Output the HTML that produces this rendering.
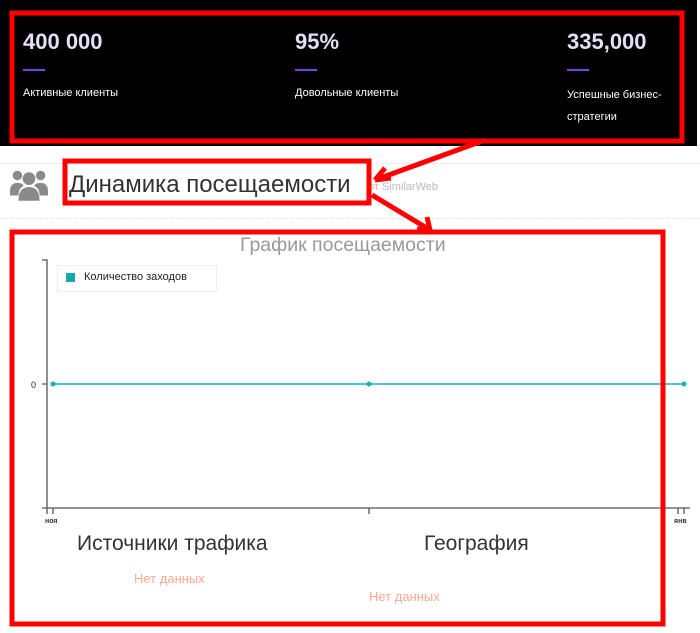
<!DOCTYPE html>
<html><head><meta charset="utf-8"><style>
body{margin:0;width:700px;height:633px;background:#fff;position:relative;overflow:hidden;font-family:"Liberation Sans",sans-serif}
.a{position:absolute;white-space:nowrap}
</style></head><body>
<div class="a" style="left:0;top:0;width:697px;height:146px;background:#000"></div>
<div class="a" style="left:23px;top:29px;color:#e6ddf7;font-size:22px;font-weight:bold">400 000</div>
<div class="a" style="left:295px;top:29px;color:#e6ddf7;font-size:22px;font-weight:bold">95%</div>
<div class="a" style="left:567px;top:29px;color:#e6ddf7;font-size:22px;font-weight:bold">335,000</div>
<div class="a" style="left:23px;top:69px;width:22px;height:2px;background:#7b3fe4"></div>
<div class="a" style="left:295px;top:69px;width:22px;height:2px;background:#7b3fe4"></div>
<div class="a" style="left:567px;top:69px;width:22px;height:2px;background:#7b3fe4"></div>
<div class="a" style="left:23px;top:87px;color:#fff;font-size:11px">Активные клиенты</div>
<div class="a" style="left:295px;top:87px;color:#fff;font-size:11px">Довольные клиенты</div>
<div class="a" style="left:567px;top:84px;color:#fff;font-size:11px;line-height:22px;white-space:normal;width:110px">Успешные бизнес-стратегии</div>
<div class="a" style="left:0;top:163px;width:700px;height:1px;background:#eee"></div>
<div class="a" style="left:0;top:218px;width:700px;border-top:1px dashed #e6e6e6"></div>
<svg class="a" style="left:10px;top:170px" width="38" height="32" viewBox="0 0 36 30"><g fill="#8a8a8a"><circle cx="7" cy="5" r="4.5"/><circle cx="29" cy="5" r="4.5"/><circle cx="18" cy="8" r="6"/><path d="M0 20q0-8 7-8q5 0 6 3q-5 2-5 9H0z"/><path d="M36 20q0-8-7-8q-5 0-6 3q5 2 5 9h8z"/><path d="M8 29q0-13 10-13t10 13z"/></g></svg>
<div class="a" style="left:69px;top:171px;color:#333;font-size:24px">Динамика посещаемости</div>
<div class="a" style="left:368px;top:181px;color:#bbb;font-size:11px">от SimilarWeb</div>
<div class="a" style="left:240px;top:234px;color:#999;font-size:19.5px">График посещаемости</div>
<div class="a" style="left:57px;top:265px;width:158px;height:25px;border:1px solid #eee;background:#fff"></div>
<div class="a" style="left:66px;top:273px;width:9px;height:9px;background:#17a7b0"></div>
<div class="a" style="left:84px;top:271px;color:#222;font-size:11px">Количество заходов</div>
<svg class="a" style="left:0;top:0" width="700" height="633">
<path d="M42 260H47V508M42 508H690M47 508v6M53 508v6M369 508v6M684 508v6M678 508v6M42 384h5" stroke="#555" stroke-width="1.3" fill="none"/>
<line x1="53" y1="384" x2="684" y2="384" stroke="#17b0b9" stroke-width="1.5"/>
<circle cx="53" cy="384" r="2.5" fill="#17b0b9"/><circle cx="369" cy="384" r="2.5" fill="#17b0b9"/><circle cx="684" cy="384" r="2.5" fill="#17b0b9"/>
<text x="31" y="388" font-size="9" fill="#222" font-family="Liberation Sans">0</text>
<text x="45" y="523" font-size="7" font-weight="bold" fill="#333" font-family="Liberation Sans">ноя</text>
<text x="674" y="523" font-size="7" font-weight="bold" fill="#333" font-family="Liberation Sans">янв</text>
<g stroke="#f00" stroke-width="5" fill="none">
<rect x="12" y="13" width="670" height="128"/>
<rect x="65" y="161" width="304" height="42"/>
<rect x="12" y="232" width="651" height="392"/>
<path d="M485 140L375 180M375 180l16-2M375 180l10-12M372 195L430 230M430 230l-3-13M430 230l-13-1"/>
</g>
</svg>
<div class="a" style="left:77px;top:532px;color:#333;font-size:21px">Источники трафика</div>
<div class="a" style="left:424px;top:532px;color:#333;font-size:21px">География</div>
<div class="a" style="left:134px;top:571px;color:#f9a98f;font-size:13px">Нет данных</div>
<div class="a" style="left:369px;top:589px;color:#f9a98f;font-size:13px">Нет данных</div>
</body></html>
